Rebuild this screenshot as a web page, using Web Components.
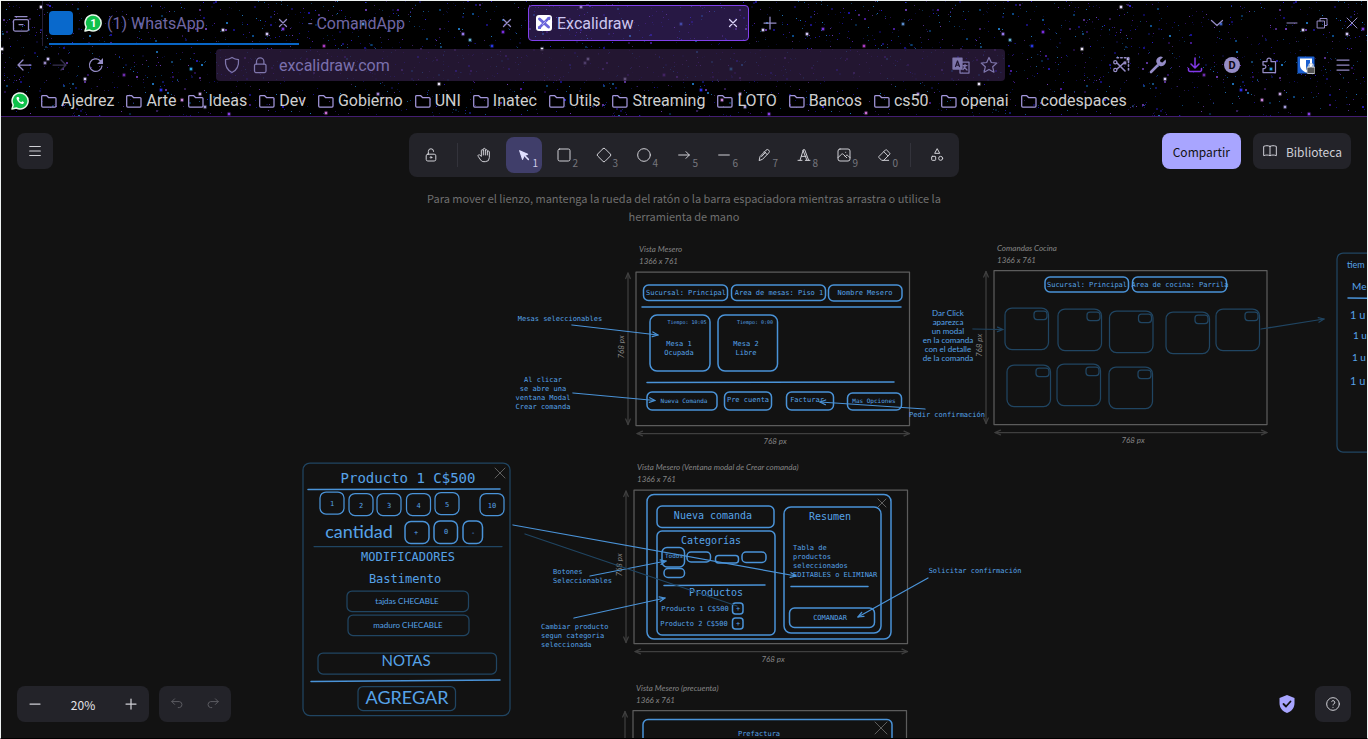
<!DOCTYPE html>
<html lang="es">
<head>
<meta charset="utf-8">
<title>Excalidraw</title>
<style>
html,body{margin:0;height:100%;background:#121212;overflow:hidden}
body{font-family:Roboto,sans-serif}
</style>
</head>
<body>
<app-window></app-window>
<script>
const define=(name,html,setup)=>{
  const t=document.createElement('template');t.innerHTML=html;
  customElements.define(name,class extends HTMLElement{
    constructor(){super();this.attachShadow({mode:'open'}).append(t.content.cloneNode(true));}
    connectedCallback(){if(setup&&!this.ready){this.ready=true;setup(this,this.shadowRoot);}}
  });
};

/* Icon set: [viewBox size, markup]. Stroke icons inherit currentColor. */
const ICONS={
  box:[20,'<path d="M4 3.500h12M4 6.500h12A1.500 1.500 0 0 1 17.500 8v8.500a1.500 1.500 0 0 1-1.500 1.500H4a1.500 1.500 0 0 1-1.500-1.500V8A1.500 1.500 0 0 1 4 6.500zM8 11.500h4"/>'],
  whatsapp:[18,'<path d="M1 17l1.200-4A8 8 0 1 1 5.300 16z" fill="#0fc14b" stroke="#e9f7ec" stroke-width="1.500"/><path d="M6.200 5c-1 .6-1 2 .6 4 1.800 2.300 4 3.500 5.300 2.800.9-.5 1-1.500.6-1.800l-1.500-.8-.9 1C9.200 9.900 8 8.700 7.600 7.700l.8-.9L7.600 5z" fill="#fff" stroke="none"/>'],
  badge:[18,'<path d="M1 17l1.200-4A8 8 0 1 1 5.300 16z" fill="#0fc14b" stroke="#e9f7ec" stroke-width="1.500"/><text x="9.500" y="13" font-family="Roboto" font-size="11" font-weight="700" fill="#fff" stroke="none" text-anchor="middle">1</text>'],
  excali:[16,'<rect width="16" height="16" rx="3" fill="#fff" stroke="none"/><path d="M3.500 4L12.500 12" stroke="#6965db" stroke-width="3"/><path d="M12 3.800L3.500 12.500" stroke="#6965db" stroke-width="2.600"/><path d="M12 2.600l1.800-.3-.3 2M2.600 11.800v1.600h1.800" stroke="#6965db" stroke-width="1.300"/><path d="M6.500 9.500l3-3" stroke="#fff" stroke-width=".5"/>'],
  x:[16,'<path d="M4.500 4.500l7 7M11.500 4.500l-7 7"/>'],
  bigx:[16,'<path d="M3 3l10 10M13 3L3 13" stroke-width="1"/>'],
  plus:[16,'<path d="M3 8h10M8 3v10"/>'],
  newtab:[16,'<path d="M8 2v12M2 8h12"/>'],
  minus:[16,'<path d="M3 8h10" stroke-width="1"/>'],
  out:[16,'<path d="M3 8h10"/>'],
  chev:[16,'<path d="M2.500 5.500L8 10.500l5.500-5"/>'],
  restore:[16,'<path d="M3.500 6h7v7h-7zM6 6V3.500h7v7h-2.500" stroke-width="1"/>'],
  back:[16,'<path d="M15 8H2M7 3L2 8l5 5"/>'],
  fwd:[16,'<path d="M1 8h13M9 3l5 5-5 5"/>'],
  reload:[16,'<path d="M14 9A6.300 6.300 0 1 1 12 3.500L14.500 6"/><path d="M15 1v6H9z" fill="currentColor" stroke="none"/>'],
  shield:[18,'<path d="M9 1.500c2 1.300 4 2 6.500 2.200C16 9.500 14 14 9 16.500 4 14 2 9.500 2.500 3.700 5 3.500 7 2.800 9 1.500z"/>'],
  lock:[18,'<rect x="3.500" y="8" width="11.500" height="8.500" rx="1.500"/><path d="M5.500 8V5.500a3.700 3.700 0 0 1 7.400 0V8"/>'],
  translate:[18,'<path d="M1 2h9v11H1z" fill="currentColor"/><path d="M10 6h7v11H8v-4"/><path d="M3.500 10.500L5.500 5l2 5.500M4.200 9h2.600" stroke="#221733"/><path d="M11 9.500h4M13 8.500c1 2-1 4-2 5M12 11l3 3"/>'],
  star:[18,'<path d="M9 1.500l2.300 5 5.500.6-4.100 3.700 1.200 5.400L9 13.500l-4.900 2.700 1.200-5.400L1.200 7.100l5.500-.6z"/>'],
  scissors:[18,'<path d="M5 7l8 8M5 13l8-7" stroke-width="1.600"/><circle cx="3.300" cy="6.300" r="1.600"/><circle cx="3.300" cy="14" r="1.600"/><path d="M5 1.800h11.500V14" stroke-dasharray="1.500 2.200" stroke-width="1.600"/>'],
  wrench:[18,'<path d="M2 16l6.500-6.500" stroke-width="2.600"/><path d="M16.500 3.500l-3 3-2-.5L11 4l3-2.800A4.500 4.500 0 0 0 8 7.500a4.500 4.500 0 0 0 8.500-4z" fill="currentColor" stroke="none"/>'],
  download:[18,'<path d="M9 2v9.500M5 8l4 4 4-4M2.500 12.500V14A1.500 1.500 0 0 0 4 15.500h10a1.500 1.500 0 0 0 1.500-1.500v-1.500" stroke-width="1.500"/>'],
  account:[18,'<circle cx="9" cy="9" r="8" fill="currentColor" stroke="none"/><text x="9" y="13" font-family="Roboto" font-size="11" font-weight="700" fill="#0c0714" stroke="none" text-anchor="middle">D</text>'],
  puzzle:[18,'<path d="M3 5.500h4V4a2 2 0 0 1 4 0v1.500h4.500v11H3v-4h1.500a1.800 1.800 0 0 0 0-3.500H3z"/>'],
  bitwarden:[18,'<rect x=".5" y=".5" width="17" height="17" rx="1" fill="#1a5fd0" stroke="none"/><path d="M3 2.500h12V9c0 4-3 6-6 7.500C6 15 3 13 3 9z" fill="#fff" stroke="none"/><path d="M9 4h4v5c0 2-1.500 4-4 5z" fill="#1a5fd0" stroke="none"/><rect x="10" y="11" width="8" height="6.500" rx="1" fill="#555" stroke="#ddd" stroke-width=".8"/><path d="M12 11V9.500a2 2 0 0 1 4 0V11" stroke="#ddd"/>'],
  menu:[18,'<path d="M3 4h12M3 9h12M3 14h12"/>'],
  folder:[16,'<path d="M.7 13V3.500a1 1 0 0 1 1-1H5.500l2 2h6.500a1 1 0 0 1 1 1V13a1 1 0 0 1-1 1H1.700a1 1 0 0 1-1-1z"/>'],
  toollock:[20,'<rect x="4" y="9" width="12" height="8.500" rx="2"/><circle cx="10" cy="13" r="1"/><path d="M6.700 9V5.500a3.300 3.300 0 0 1 6.600 0"/>'],
  hand:[24,'<path d="M8 13V5.500a1.500 1.500 0 0 1 3 0V12M11 5.500v-2a1.500 1.500 0 1 1 3 0V12M14 5.500a1.500 1.500 0 0 1 3 0V12M17 7.500a1.500 1.500 0 0 1 3 0V16a6 6 0 0 1-6 6h-2c-2.100 0-3.600-.5-5-2.500L3.300 14a1.500 1.500 0 0 1 2.500-1.700L8 14"/>'],
  cursor:[22,'<path d="M5 5l4 12 2-5 5-2z" fill="currentColor"/><path d="M12 12l5 5" stroke-width="2"/>'],
  square:[24,'<rect x="3" y="3" width="18" height="18" rx="2.500"/>'],
  diamond:[24,'<path d="M10.500 2.500L2.500 10.500a2 2 0 0 0 0 3l8 8a2 2 0 0 0 3 0l8-8a2 2 0 0 0 0-3l-8-8a2 2 0 0 0-3 0z"/>'],
  circle:[24,'<circle cx="12" cy="12" r="9.500"/>'],
  arrow:[24,'<path d="M4 12h16M15 7l5 5-5 5"/>'],
  line:[24,'<path d="M4 12h16"/>'],
  pencil:[20,'<path d="M4 16.500L5 12l7.500-8a2.400 2.400 0 0 1 3.500 3.300L8.500 15z M10.500 6l3.500 3.500M7 12l5-5.500"/>'],
  font:[24,'<path d="M3 20h6M14 20h7M6 20l5-16h2l6 16M8 14h7M10.500 5l6 15"/>'],
  image:[24,'<rect x="3" y="3" width="18" height="18" rx="3"/><path d="M3 16l5-5c1-1 2-1 3 0l5 5M14 14l1-1c1-1 2-1 3 0l3 3M14.500 8h.1"/>'],
  eraser:[24,'<path d="M19 20H8.500l-4.200-4.300a1 1 0 0 1 0-1.400l10-10a1 1 0 0 1 1.400 0l5 5a1 1 0 0 1 0 1.400L11.500 20M18 13.300L11.700 7"/>'],
  shapes:[24,'<path d="M12 3L8.500 9.500h7z"/><circle cx="17.500" cy="17" r="3"/><rect x="4" y="14" width="6" height="6" rx="1"/>'],
  book:[24,'<path d="M12 5c-3-1.300-6-1.300-9.500 0v14c3.500-1.300 6.500-1.300 9.500 0 3-1.300 6-1.300 9.500 0V5c-3.500-1.300-6.500-1.300-9.500 0zM12 5v14"/>'],
  undo:[20,'<path d="M7 10.500L3.500 7 7 3.500M3.500 7H13a3.800 3.800 0 0 1 0 7.500h-1.500"/>'],
  redo:[20,'<path d="M13 10.500L16.500 7 13 3.500M16.500 7H7a3.800 3.800 0 0 0 0 7.500h1.500"/>'],
  check:[20,'<path d="M10 1l7.500 3v5c0 5-3 8.300-7.500 10C5.500 17.300 2.500 14 2.500 9V4z" fill="currentColor" stroke="none"/><path d="M6.500 10l2.500 2.500L13.500 7.500" stroke="#121212" stroke-width="1.800"/>'],
  help:[24,'<circle cx="12" cy="12" r="9.500"/><path d="M12 17v.1M12 13.500a1.500 1.500 0 0 1 1-1.500 2.600 2.600 0 1 0-3-4"/>']
};
customElements.define('line-icon',class extends HTMLElement{
  constructor(){super();this.attachShadow({mode:'open'});}
  connectedCallback(){
    const [box,body]=ICONS[this.getAttribute('name')],s=this.getAttribute('size')||16;
    this.shadowRoot.innerHTML=`<style>:host{display:block;flex:none}svg{display:block}</style><svg aria-hidden="true" width="${s}" height="${s}" viewBox="0 0 ${box} ${box}" fill="none" stroke="currentColor" stroke-width="${box>20?1.5:1.25}" stroke-linecap="round" stroke-linejoin="round">${body}</svg>`;
  }
});

/* Star field: a 540px tile repeated across the toolbar area. */
define('star-field',`<style>:host{display:block;background:#000}svg{display:block;width:100%;height:100%}</style>
<svg aria-hidden="true"><defs><pattern id="p" width="540" height="117" patternUnits="userSpaceOnUse"></pattern></defs><rect width="100%" height="100%" fill="url(#p)"/></svg>`,(el,root)=>{
  let seed=73,out='';const rnd=()=>(seed=(seed*16807)%2147483647)/2147483647;
  const tint=['#1b12a0','#2a1cd0','#0c4f8e','#4a1c9a','#10186a','#1d72b8','#6a3ab0','#12104e'];
  for(let i=0;i<1000;i++){const v=rnd(),s=v<.14?2:1;out+=`<rect x="${Math.floor(rnd()*539)}" y="${Math.floor(rnd()*116)}" width="${s}" height="${s}" fill="${tint[Math.floor(rnd()*8)]}" opacity="${(rnd()*.6+.4).toFixed(2)}"/>`;}
  const big=[[267,34,'#d8ccff'],[283,29,'#7a38e0'],[41,7,'#e8dcff'],[48,59,'#d0c4ff'],[45,63,'#9a8ac8'],[2,49,'#f0eaff'],[223,30,'#dcd4ff'],[85,79,'#d8ccff'],[439,84,'#f0eaff'],[229,114,'#8a3ee8'],[182,100,'#d088e0'],[191,69,'#2aa4e8'],[161,90,'#2a2cf0'],[463,34,'#9a7af0'],[503,32,'#7a2ce0'],[492,46,'#2838e8'],[141,24,'#3a62c8'],[324,46,'#b03cc8'],[326,113,'#d070d8'],[124,75,'#702cb0'],[378,94,'#a888e0'],[200,94,'#c8a8e8'],[205,107,'#a8a0e0'],[470,40,'#60b0d8'],[363,24,'#5a8ed0']];
  for(const [x,y,c] of big)out+=`<circle cx="${x}" cy="${y}" r="2.200" fill="${c}" opacity=".3"/><circle cx="${x}" cy="${y}" r="1.200" fill="${c}"/>`;
  root.getElementById('p').innerHTML=out;
});

define('browser-tab',`<style>
:host{display:flex;align-items:center;box-sizing:border-box;height:36px;width:221px;padding:0 7px;border:1px solid transparent;border-radius:4px;color:#7067a3;font-size:16px}
:host([current]){background:rgba(78,47,135,.5);border-color:#8140ec;color:#cdc6f0}
.title{flex:1;white-space:nowrap;overflow:hidden;margin-left:5px}
button{all:unset;display:block;color:#958cc6}
:host([current]) button{color:#ddd6fa}
</style><slot name="icon"></slot><span class="title"><slot></slot></span><button aria-label="Cerrar pestaña"><line-icon name="x"></line-icon></button>`);

define('book-mark',`<style>:host{display:block}a{display:flex;align-items:center;gap:4px;color:#cfcfcf;text-decoration:none;font-size:16px;line-height:20px;white-space:nowrap}line-icon{color:#a296da}</style>
<a href="#"><line-icon name="folder"></line-icon><slot></slot></a>`);

define('browser-chrome',`<style>
:host{display:block;position:relative;height:117px;box-sizing:border-box;border-bottom:1px solid #431d70;color:#958cc6;flex:none}
star-field{position:absolute;inset:0}
.rows{position:relative}
button{all:unset;display:block}
.tabs{display:flex;align-items:center;height:46px}
.box{width:42px;display:grid;place-items:center}
.sep{width:1px;height:46px;background:#252036}
.group{display:flex;align-items:center;box-sizing:border-box;height:44px;margin-left:6px;width:250px;border-bottom:2px solid #0866c6;border-top:2px solid transparent}
.blue{width:24px;height:24px;border-radius:4px;background:#0969cc;flex:none}
.group browser-tab{flex:1;padding:0 7px 0 10px}
.plain{padding:0 4px 0 3px}
.plain[current]{margin:0 13px 0 8px;padding:0 7px}
.space{flex:1}
.chev{margin-right:59px}
.win{display:flex;gap:14px;padding-right:8px}
.nav{display:flex;align-items:center;height:38px;padding:0 16px}
.history{display:flex;gap:20px}
.off{color:#373051}.dl{color:#8238e8}
.url{display:flex;align-items:center;gap:10px;flex:1;height:32px;margin:0 107px 0 112px;padding:0 7px;border-radius:4px;background:rgba(48,30,68,.72);color:#7f76ac}
input{all:unset;flex:1;min-width:0;font:16px Roboto,sans-serif;color:#7a70ad}
.tools{display:flex;gap:19px}
.marks{display:flex;align-items:center;gap:12px;height:34px;padding-left:11px}
</style>
<star-field></star-field>
<div class="rows">
<div class="tabs"><button class="box" aria-label="Vista de Firefox"><line-icon name="box" size="20"></line-icon></button><span class="sep"></span>
<div class="group"><span class="blue"></span><browser-tab><line-icon slot="icon" name="badge" size="18"></line-icon>(1) WhatsApp</browser-tab></div>
<browser-tab class="plain">- ComandApp</browser-tab>
<browser-tab class="plain" current><line-icon slot="icon" name="excali" size="16"></line-icon>Excalidraw</browser-tab>
<button aria-label="Nueva pestaña"><line-icon name="newtab"></line-icon></button><span class="space"></span>
<button aria-label="Lista de pestañas" class="chev"><line-icon name="chev"></line-icon></button>
<div class="win"><button aria-label="Minimizar"><line-icon name="minus"></line-icon></button><button aria-label="Restaurar"><line-icon name="restore"></line-icon></button><button aria-label="Cerrar"><line-icon name="bigx"></line-icon></button></div></div>
<div class="nav"><div class="history"><button aria-label="Atrás"><line-icon name="back"></line-icon></button><button aria-label="Adelante" class="off"><line-icon name="fwd"></line-icon></button><button aria-label="Recargar"><line-icon name="reload"></line-icon></button></div>
<div class="url"><line-icon name="shield" size="18"></line-icon><line-icon name="lock" size="18"></line-icon><input aria-label="Dirección" value="excalidraw.com"><line-icon name="translate" size="18"></line-icon><line-icon name="star" size="18"></line-icon></div>
<div class="tools"><button aria-label="Recorte"><line-icon name="scissors" size="18"></line-icon></button><button aria-label="Herramientas"><line-icon name="wrench" size="18"></line-icon></button><button aria-label="Descargas" class="dl"><line-icon name="download" size="18"></line-icon></button><button aria-label="Cuenta"><line-icon name="account" size="18"></line-icon></button><button aria-label="Extensiones"><line-icon name="puzzle" size="18"></line-icon></button><button aria-label="Bitwarden"><line-icon name="bitwarden" size="18"></line-icon></button><button aria-label="Menú"><line-icon name="menu" size="18"></line-icon></button></div></div>
<nav class="marks"><line-icon name="whatsapp" size="18"></line-icon><book-mark>Ajedrez</book-mark><book-mark>Arte</book-mark><book-mark>Ideas</book-mark><book-mark>Dev</book-mark><book-mark>Gobierno</book-mark><book-mark>UNI</book-mark><book-mark>Inatec</book-mark><book-mark>Utils</book-mark><book-mark>Streaming</book-mark><book-mark>LOTO</book-mark><book-mark>Bancos</book-mark><book-mark>cs50</book-mark><book-mark>openai</book-mark><book-mark>codespaces</book-mark></nav>
</div>`);

define('tool-button',`<style>
:host{display:block}
button{all:unset;box-sizing:border-box;display:grid;place-items:center;position:relative;width:36px;height:36px;border-radius:8px;color:#d0d0d6}
:host([active]) button{background:#403e6a;color:#e0dfff}
:host([dim]) button{color:#5c5c62}
span{position:absolute;right:4px;bottom:2px;font-size:10px;line-height:16px;color:#77777e}
:host([active]) span{color:#cfcde8}
</style><button><span></span></button>`,(el,root)=>{
  const i=document.createElement('line-icon'),b=root.querySelector('button'),k=root.querySelector('span');
  i.setAttribute('name',el.getAttribute('icon'));
  b.prepend(i);b.setAttribute('aria-label',el.getAttribute('label'));
  if(el.hasAttribute('key'))k.textContent=el.getAttribute('key');else k.remove();
});

define('tool-bar',`<style>:host{display:flex;gap:4px;padding:4px;border-radius:8px;background:#232329;align-items:center}.sep{width:1px;height:24px;margin:0 4px;background:#33333b}</style>
<tool-button icon="toollock" label="Bloquear"></tool-button><span class="sep"></span>
<tool-button icon="hand" label="Mano"></tool-button>
<tool-button icon="cursor" key="1" label="Selección" active></tool-button>
<tool-button icon="square" key="2" label="Rectángulo"></tool-button>
<tool-button icon="diamond" key="3" label="Diamante"></tool-button>
<tool-button icon="circle" key="4" label="Elipse"></tool-button>
<tool-button icon="arrow" key="5" label="Flecha"></tool-button>
<tool-button icon="line" key="6" label="Línea"></tool-button>
<tool-button icon="pencil" key="7" label="Dibujar"></tool-button>
<tool-button icon="font" key="8" label="Texto"></tool-button>
<tool-button icon="image" key="9" label="Imagen"></tool-button>
<tool-button icon="eraser" key="0" label="Borrador"></tool-button><span class="sep"></span>
<tool-button icon="shapes" label="Más herramientas"></tool-button>`);

/* The drawing. Coordinates are window pixels; the layer is shifted up by the browser bars. */
define('draw-scene',`<style>
:host{display:block}
svg{display:block;width:100%;height:100%;fill:none;stroke-linecap:round;stroke-linejoin:round}
text{stroke:none;fill:#56a2e8;white-space:pre}
.mono{font-family:"DejaVu Sans Mono",monospace}
.hand{font-family:Lato,sans-serif}
.g{fill:#858585;font-style:italic}
.b{stroke:#4a93d8}.d{stroke:#204562}.f{stroke:#5c5c5c}.x{stroke:#5e5e5e}.a{stroke:#3f3f3f}
</style><svg role="img" aria-label="Bocetos de pantallas"><g id="s" transform="translate(0 -117)"></g></svg>`,(el,root)=>{
  let o='';
  const r=(x,y,x2,y2,rx=5,c='b',w=1.5)=>o+=`<rect class="${c}" x="${x}" y="${y}" width="${x2-x}" height="${y2-y}" rx="${rx}" stroke-width="${w}"/>`;
  const l=(x,y,x2,y2,c='b',w=1.5)=>o+=`<path class="${c}" d="M${x} ${y}L${x2} ${y2}" stroke-width="${w}"/>`;
  const head=(x,y,x2,y2,c,w)=>{const a=Math.atan2(y2-y,x2-x),p=k=>`${(x2-6*Math.cos(a+k)).toFixed(1)} ${(y2-6*Math.sin(a+k)).toFixed(1)}`;
    o+=`<path class="${c}" d="M${p(.4)}L${x2} ${y2}L${p(-.4)}" stroke-width="${w}"/>`;};
  const arrow=(x,y,x2,y2,c='b',w=1.25)=>{l(x,y,x2,y2,c,w);head(x,y,x2,y2,c,w);};
  const both=(x,y,x2,y2)=>{arrow(x,y,x2,y2,'a',1.25);head(x2,y2,x,y,'a',1.25);};
  const t=(s,x,y,size,f='mono',anchor='middle')=>o+=`<text class="${f}" x="${x}" y="${y+Math.round(size*.38)}" font-size="${size}" text-anchor="${anchor}">${s}</text>`;
  const ts=(a,x,y,step,size,f,anchor)=>a.forEach((s,i)=>t(s,x,y+i*step,size,f,anchor));
  const cross=(x,y,k)=>{l(x-k,y-k,x+k,y+k,'x',1);l(x+k,y-k,x-k,y+k,'x',1);};
  const side=(x,y)=>o+=`<text class="hand g" x="${x}" y="${y}" font-size="8" text-anchor="middle" transform="rotate(-90 ${x} ${y})">768 px</text>`;
  const frame=(x,y,x2,y2,title)=>{r(x,y,x2,y2,0,'f',1.25);t(title,x+3,y-23,8,'hand g','start');t('1366 x 761',x+3,y-11,8,'hand g','start');both(x-8,y+1,x-8,y2-1);};
  const sizes=(x,y,x2,y2)=>{both(x+1,y2+8,x2,y2+8);side(x-12,y+75);t('768 px',x+139,y2+15,8,'hand g');};

  frame(636,272,909.5,425.5,'Vista Mesero');sizes(636,272,909.5,425.5);
  r(643.5,285,727.5,300.5);r(731.5,285,825.5,300.5);r(828.5,285,902,301);
  t('Sucursal: Principal',686,292,7);t('Area de mesas: Piso 1',779,292,7);t('Nombre Mesero',865,292,7);
  l(642,307,901,307);l(647,382.5,894,382);
  r(650,315,710,371,7);r(718,315,777.5,371,7);
  t('Tiempo: 10:05',687,322,5);t('Tiempo: 0:00',755,322,5);
  ts(['Mesa 1','Ocupada'],679,343,9,7);ts(['Mesa 2','Libre'],746,343,9,7);
  r(647,392,717,410);r(724.5,392,771.5,410);r(786.5,392,833.5,410);r(847.5,393,901.5,410);
  t('Nueva Comanda',684,401,6);t('Pre cuenta',748,399,7);t('Facturar',807,399,7);t('Mas Opciones',874,401,6);
  t('Mesas seleccionables',560,318,7);arrow(572,325,658,335);
  ts(['Al clicar','se abre una','ventana Modal','Crear comanda'],543,379,9,7);arrow(573,393,655,400.5);
  t('Pedir confirmación',947,414,7);arrow(925,409,820,402);

  frame(994,270.5,1267,424.5,'Comandas Cocina');sizes(994,270.5,1267,424.5);
  r(1045,277,1128.5,292);r(1132.5,277,1226.5,292);
  t('Sucursal: Principal',1087,284,7);t('Area de cocina: Parrila',1180,284,7);
  [[1005,308],[1058,309],[1109.5,311],[1166,312],[1216,309],[1007,365],[1057,364],[1109,367]].forEach(([x,y])=>{r(x,y,x+43.5,y+41.5,7,'d',1.25);r(x+29,y+3,x+42,y+11.5,3,'d',1.25);});
  ts(['Dar Click','aparezca','un modal','en la comanda','con el detalle','de la comanda'],948,313,9,8,'hand');
  arrow(973,329,1003,329.5,'d');arrow(1261,329,1324,319,'d');
  r(1337,253,1440,452,6,'d',1.25);l(1348,298,1440,299);
  t('tiem',1347,265,9,'hand','start');t('Me',1352,286,10,'hand','start');
  t('1 u',1350,315,11,'hand','start');t('1 u',1353,335,10,'hand','start');t('1 u',1352,357,10,'hand','start');t('1 u',1350,381,11,'hand','start');

  r(303,463,510,715.5,7,'d',1.25);cross(500,473,5);
  t('Producto 1 C$500',408,478,14);l(308,489.5,500,489);
  [[320,492,1],[349,493.5,2],[377,493.5,3],[406.5,493.5,4],[435,492.5,5],[480,493.5,10]].forEach(([x,y,n])=>{r(x,y,x+24,y+22,6,'b',1.25);t(n,x+12,y+11,7);});
  t('cantidad',359,531,18,'hand');
  r(405,521.5,429,543.5,6);r(434,521,457.5,543.5,6);r(463,521,482.5,543.5,6);t('+',416,532,7);t('0',446,531,7);t('-',473,532,7);
  l(314,546.5,502,546.5,'d',1.25);
  t('MODIFICADORES',408,556,12);t('Bastimento',405,578,12);
  r(347,591,468.5,611.5,5,'d',1.25);r(348,615,469,635.5,5,'d',1.25);
  t('tajdas CHECABLE',407,601,8,'hand');t('maduro CHECABLE',408,625,8,'hand');
  r(318,653,496.5,674,5,'d',1.25);t('NOTAS',406,660,15,'hand');
  l(311,681.5,500,680);r(358,686.5,455.5,710.5,5,'d',1.25);t('AGREGAR',407,697,18,'hand');

  frame(634,490,907.5,643.5,'Vista Mesero (Ventana modal de Crear comanda)');sizes(634,490,907.5,643.5);
  r(647,494.5,891,639,7);cross(882,503,4);
  r(657,506,774,527.5);t('Nueva comanda',713,515,10);
  r(657,531,775,635,5);t('Categorías',711,540,10);
  r(662,547.5,684.5,567,5);t('Todos',674,556,6);r(687,552,710.5,562,4);r(715.5,555.5,738.5,563,3);r(742,552,766,562.5,4);r(664,568.5,684.5,577.5,4);
  l(664,585.5,765,585);t('Productos',716,592,10);
  t('Producto 1 C$500',695,608,7);t('Producto 2 C$500',694,623,7);
  r(732.5,603,743,614,3);r(732.5,618,743,629,3);t('+',738,608,7);t('+',738,623,7);
  r(784,507,881,633,7);t('Resumen',830,516,10);
  ts(['Tabla de','productos','seleccionados','EDITABLES o ELIMINAR'],793,547,9,7,'mono','start');
  l(791,586.5,868,586.5);r(789.5,608,874.5,627.5,5);t('COMANDAR',830,617,7);
  t('Solicitar confirmación',975,570,7);arrow(928,578,858,617);
  ts(['Botones','Seleccionables'],553,571,9,7,'mono','start');arrow(590,576,666,561);
  ts(['Cambiar producto','segun categoria','seleccionada'],541,626,9,7,'mono','start');arrow(574,618,665,598);
  arrow(513,525,796,576);l(525,534,737,606,'d',1.25);

  frame(633,710.5,906.5,860,'Vista Mesero (precuenta)');
  r(643,719.5,892,830,5);cross(881,728,6);t('Prefactura',759,733,7);
  root.getElementById('s').innerHTML=o;
});

define('excalidraw-app',`<style>
:host{display:grid;position:relative;flex:1;min-height:0;grid-template-rows:auto 1fr auto;padding:16px 17px 17px;box-sizing:border-box;background:#121212;font-family:"Noto Sans CJK SC",sans-serif;color:#e3e3e8}
draw-scene{position:absolute;inset:0}
button{all:unset;box-sizing:border-box;display:flex;align-items:center;justify-content:center;height:36px;border-radius:8px;white-space:nowrap}
.top,.foot{position:relative;display:grid;grid-template-columns:1fr auto 1fr;align-items:start}
.right{display:flex;gap:12px;justify-self:end}
.share{background:#a8a5ff;color:#121212;font-size:12px;padding:0 11px}
.lib{background:#232329;font-size:12px;gap:8px;padding:0 9px;color:#ceced6}
.menu{justify-self:start;background:#232329;border-radius:8px}
p{position:relative;margin:12px auto 0;max-width:520px;text-align:center;font-size:11px;line-height:18px;color:#6f6f6f}
.foot{grid-template-columns:auto auto 1fr;gap:10px;align-items:center}
.set{display:flex;align-items:center;background:#232329;border-radius:8px}
.pct{width:60px;font-size:12px}
.end{display:flex;align-items:center;justify-content:flex-end;gap:18px;color:#a8a5ff}
.end tool-button{background:#232329;border-radius:8px}
</style>
<draw-scene></draw-scene>
<div class="top"><tool-button class="menu" icon="menu" label="Menú"></tool-button><tool-bar></tool-bar>
<div class="right"><button class="share">Compartir</button><button class="lib"><line-icon name="book" size="16"></line-icon>Biblioteca</button></div></div>
<p>Para mover el lienzo, mantenga la rueda del ratón o la barra espaciadora mientras arrastra o utilice la herramienta de mano</p>
<div class="foot"><div class="set"><tool-button icon="out" label="Alejar"></tool-button><button class="pct">20%</button><tool-button icon="plus" label="Acercar"></tool-button></div>
<div class="set"><tool-button dim icon="undo" label="Deshacer"></tool-button><tool-button dim icon="redo" label="Rehacer"></tool-button></div>
<div class="end"><line-icon name="check" size="20"></line-icon><tool-button icon="help" label="Ayuda"></tool-button></div></div>`);

define('app-window',`<style>:host{display:flex;flex-direction:column;height:100vh;position:relative}
:host::after{content:"";position:absolute;inset:0;border:1px solid #eef2f2;border-bottom-color:#000;pointer-events:none}</style>
<browser-chrome></browser-chrome><excalidraw-app></excalidraw-app>`);
</script>
</body>
</html>
